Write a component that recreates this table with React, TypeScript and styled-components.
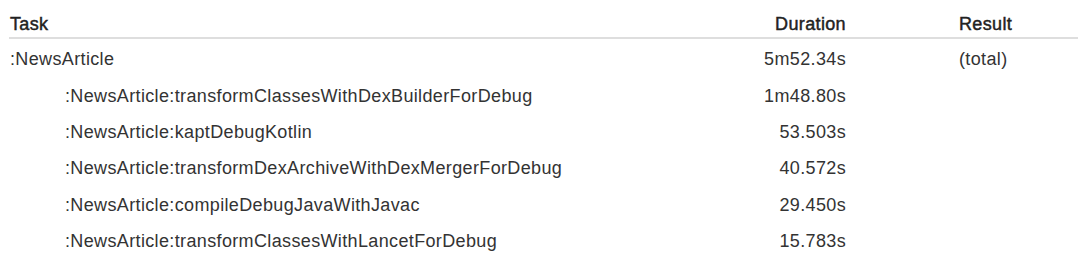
import React from "react";
import styled, { createGlobalStyle } from "styled-components";

const Global = createGlobalStyle`
  html, body { margin: 0; padding: 0; background: #ffffff; }
  body { font-family: "Liberation Sans", Arial, Helvetica, sans-serif; color: #333333; }
`;

const Table = styled.div`
  display: grid;
  grid-template-columns: 1fr 220px 120px;
  margin: 0 2px 0 9px;
  font-size: 18px;
  line-height: 22px;
  letter-spacing: 0.36px;
`;

const HeadCell = styled.div<{ $align?: "left" | "right"; $padRight?: number }>`
  padding: 13px ${(p) => p.$padRight ?? 0}px 2px ${(p) => (p.$align === "right" ? 0 : 1)}px;
  text-align: ${(p) => p.$align ?? "left"};
  font-weight: 400;
  color: #222222;
  -webkit-text-stroke: 0.45px #222222;
  border-bottom: 2px solid #dedede;
`;

const Cell = styled.div<{ $align?: "left" | "right"; $indent?: number; $padRight?: number }>`
  padding: 9.2px ${(p) => p.$padRight ?? 0}px 5.2px ${(p) => 1 + (p.$indent ?? 0)}px;
  text-align: ${(p) => p.$align ?? "left"};
  white-space: nowrap;
`;

type Row = { task: string; duration: string; result?: string; child?: boolean };

const rows: Row[] = [
  { task: ":NewsArticle", duration: "5m52.34s", result: "(total)" },
  { task: ":NewsArticle:transformClassesWithDexBuilderForDebug", duration: "1m48.80s", child: true },
  { task: ":NewsArticle:kaptDebugKotlin", duration: "53.503s", child: true },
  { task: ":NewsArticle:transformDexArchiveWithDexMergerForDebug", duration: "40.572s", child: true },
  { task: ":NewsArticle:compileDebugJavaWithJavac", duration: "29.450s", child: true },
  { task: ":NewsArticle:transformClassesWithLancetForDebug", duration: "15.783s", child: true },
];

export default function App() {
  return (
    <>
      <Global />
      <Table>
        <HeadCell>Task</HeadCell>
        <HeadCell $align="right" $padRight={112}>Duration</HeadCell>
        <HeadCell>Result</HeadCell>
        {rows.map((r) => (
          <React.Fragment key={r.task}>
            <Cell $indent={r.child ? 55 : 0}>{r.task}</Cell>
            <Cell $align="right" $padRight={112}>{r.duration}</Cell>
            <Cell>{r.result ?? ""}</Cell>
          </React.Fragment>
        ))}
      </Table>
    </>
  );
}
